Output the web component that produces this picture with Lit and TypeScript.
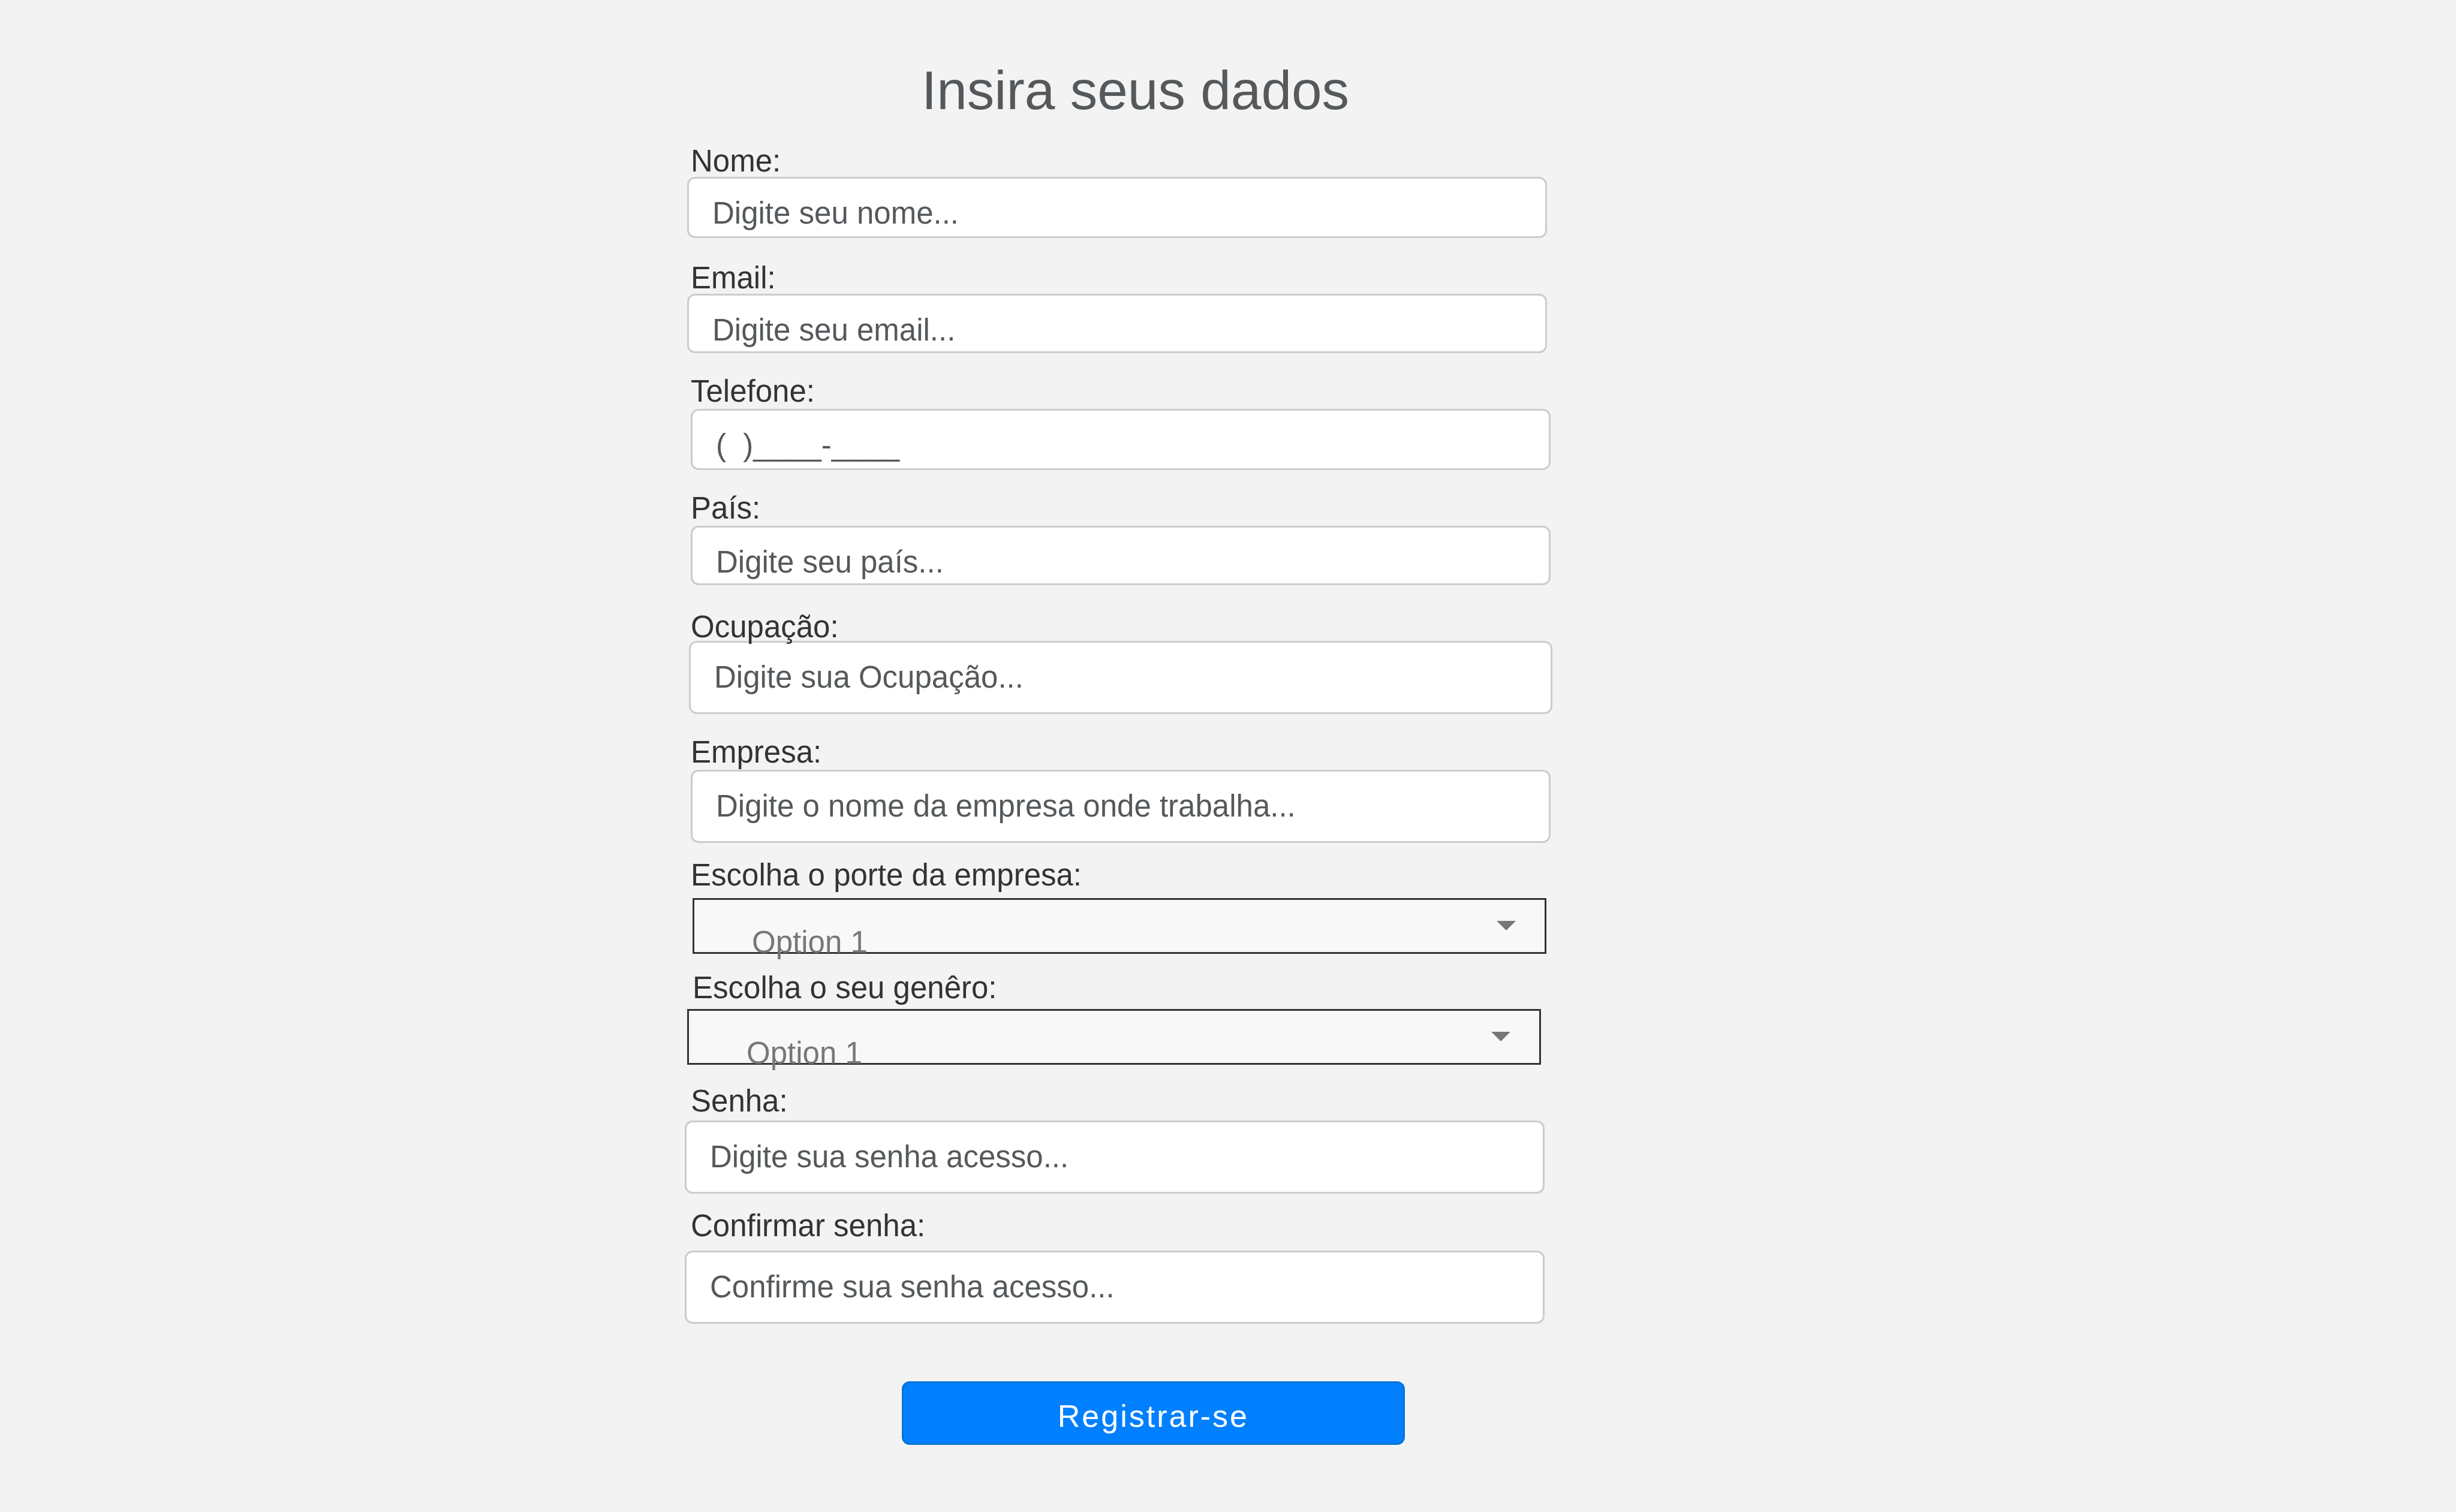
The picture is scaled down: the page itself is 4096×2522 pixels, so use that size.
import { LitElement, html, css } from "lit";
import { customElement } from "lit/decorators.js";

interface Field {
  id: string;
  label: string;
  kind: "text" | "email" | "tel" | "password" | "select";
  hint: string;
  // layout classes: space above, label gap, horizontal start, box size
  layout: string;
  labelStart?: string;
}

const FIELDS: Field[] = [
  { id: "nome", label: "Nome:", kind: "text", hint: "Digite seu nome...", layout: "above-44 gap-3 start-4 medium" },
  { id: "email", label: "Email:", kind: "email", hint: "Digite seu email...", layout: "above-44 gap-3 start-4 short" },
  { id: "telefone", label: "Telefone:", kind: "tel", hint: "(  )____-____", layout: "above-41 gap-6 start-10 medium" },
  { id: "pais", label: "País:", kind: "text", hint: "Digite seu país...", layout: "above-41 gap-6 start-10 short" },
  { id: "ocupacao", label: "Ocupação:", kind: "text", hint: "Digite sua Ocupação...", layout: "above-47 gap-0 start-7 tall wide" },
  { id: "empresa", label: "Empresa:", kind: "text", hint: "Digite o nome da empresa onde trabalha...", layout: "above-41 gap-6 start-10 tall" },
  { id: "porte", label: "Escolha o porte da empresa:", kind: "select", hint: "Option 1", layout: "above-31 gap-15 start-13" },
  { id: "genero", label: "Escolha o seu genêro:", kind: "select", hint: "Option 1", layout: "above-34 gap-12 start-4", labelStart: "start-13" },
  { id: "senha", label: "Senha:", kind: "password", hint: "Digite sua senha acesso...", layout: "above-38 gap-9 start-0 tall" },
  { id: "confirmar", label: "Confirmar senha:", kind: "password", hint: "Confirme sua senha acesso...", layout: "above-31 gap-18 start-0 tall" },
];

@customElement("app-root")
export class AppRoot extends LitElement {
  static styles = css`
    :host {
      display: block;
      min-height: 100vh;
      background: #f3f3f3;
      color: #333;
      font-family: "Liberation Sans", Arial, Helvetica, sans-serif;
      font-size: 51px;
      line-height: 58px;
    }
    * {
      box-sizing: border-box;
    }
    .page {
      display: grid;
      grid-template-columns: 1142fr 1447fr 1507fr;
      padding: 100px 0;
    }
    .form {
      grid-column: 2;
      display: flex;
      flex-direction: column;
    }
    .title {
      margin: 0;
      padding-left: 56px;
      font-size: 91px;
      line-height: 102px;
      font-weight: 400;
      text-align: center;
      color: #55595c;
      white-space: nowrap;
    }
    .field {
      display: flex;
      flex-direction: column;
      align-items: flex-start;
      margin-top: var(--above);
      gap: var(--gap);
    }
    .above-31 { --above: 31px; }
    .above-34 { --above: 34px; }
    .above-38 { --above: 38px; }
    .above-41 { --above: 41px; }
    .above-44 { --above: 44px; }
    .above-47 { --above: 47px; }
    .gap-0 { --gap: 0px; }
    .gap-3 { --gap: 3px; }
    .gap-6 { --gap: 6px; }
    .gap-9 { --gap: 9px; }
    .gap-12 { --gap: 12px; }
    .gap-15 { --gap: 15px; }
    .gap-18 { --gap: 18px; }
    .start-0 { --start: 0px; }
    .start-4 { --start: 4px; }
    .start-7 { --start: 7px; }
    .start-10 { --start: 10px; }
    .start-13 { --start: 13px; }
    .short { --bottom: 7px; }
    .medium { --bottom: 10px; }
    .tall { --bottom: 30px; }

    /* Labels stay above the boxes so that descenders cross the border. */
    .label {
      position: relative;
      z-index: 1;
      margin-left: var(--start);
      line-height: 46px;
      white-space: nowrap;
    }
    .input {
      display: block;
      width: calc(100% - 13px);
      height: calc(92px + var(--bottom));
      margin: 0 0 0 var(--start);
      padding: 28px 39px var(--bottom);
      border: 3px solid #ccc;
      border-radius: 13px;
      background: #fff;
      color: #55595c;
      font: inherit;
    }
    .wide .input {
      width: calc(100% - 7px);
    }
    .input::placeholder {
      color: #55595c;
      opacity: 1;
    }

    .picker {
      display: grid;
      width: calc(100% - 23px);
      height: 93px;
      margin-left: var(--start);
      border: 3px solid #333;
      background: #f8f8f8;
    }
    .picker > * {
      grid-area: 1 / 1;
    }
    /* The list is taller than its frame; its text runs over the lower edge. */
    .select {
      appearance: none;
      position: relative;
      width: 100%;
      height: 102px;
      margin: 0;
      padding: 42px 96px 2px;
      border: 0;
      border-radius: 0;
      background: transparent;
      color: #777;
      font: inherit;
    }
    .arrow {
      justify-self: end;
      width: 32px;
      height: 16px;
      margin: 35px 48px 0 0;
      fill: #777;
    }

    .submit {
      width: 58%;
      height: 106px;
      margin: 96px 0 0 25%;
      padding: 9px 0 0;
      border: 3px solid #0275d8;
      border-radius: 13px;
      background: #0080ff;
      color: #fff;
      font: inherit;
      font-size: 52px;
      letter-spacing: 3px;
    }
  `;

  private renderControl(field: Field) {
    if (field.kind === "select") {
      return html`<div class="picker">
        <svg class="arrow" viewBox="0 0 32 16" aria-hidden="true"><path d="M0 0H32L16 16Z" /></svg>
        <select class="select" id=${field.id} name=${field.id}>
          <option>${field.hint}</option>
        </select>
      </div>`;
    }
    return html`<input class="input" id=${field.id} name=${field.id} type=${field.kind} placeholder=${field.hint} />`;
  }

  render() {
    return html`<main class="page">
      <form class="form" @submit=${(event: Event) => event.preventDefault()}>
        <h1 class="title">Insira seus dados</h1>
        ${FIELDS.map(
          (field) => html`<div class="field ${field.layout}">
            <label class="label ${field.labelStart ?? "start-10"}" for=${field.id}>${field.label}</label>
            ${this.renderControl(field)}
          </div>`
        )}
        <button class="submit" type="submit">Registrar-se</button>
      </form>
    </main>`;
  }
}
